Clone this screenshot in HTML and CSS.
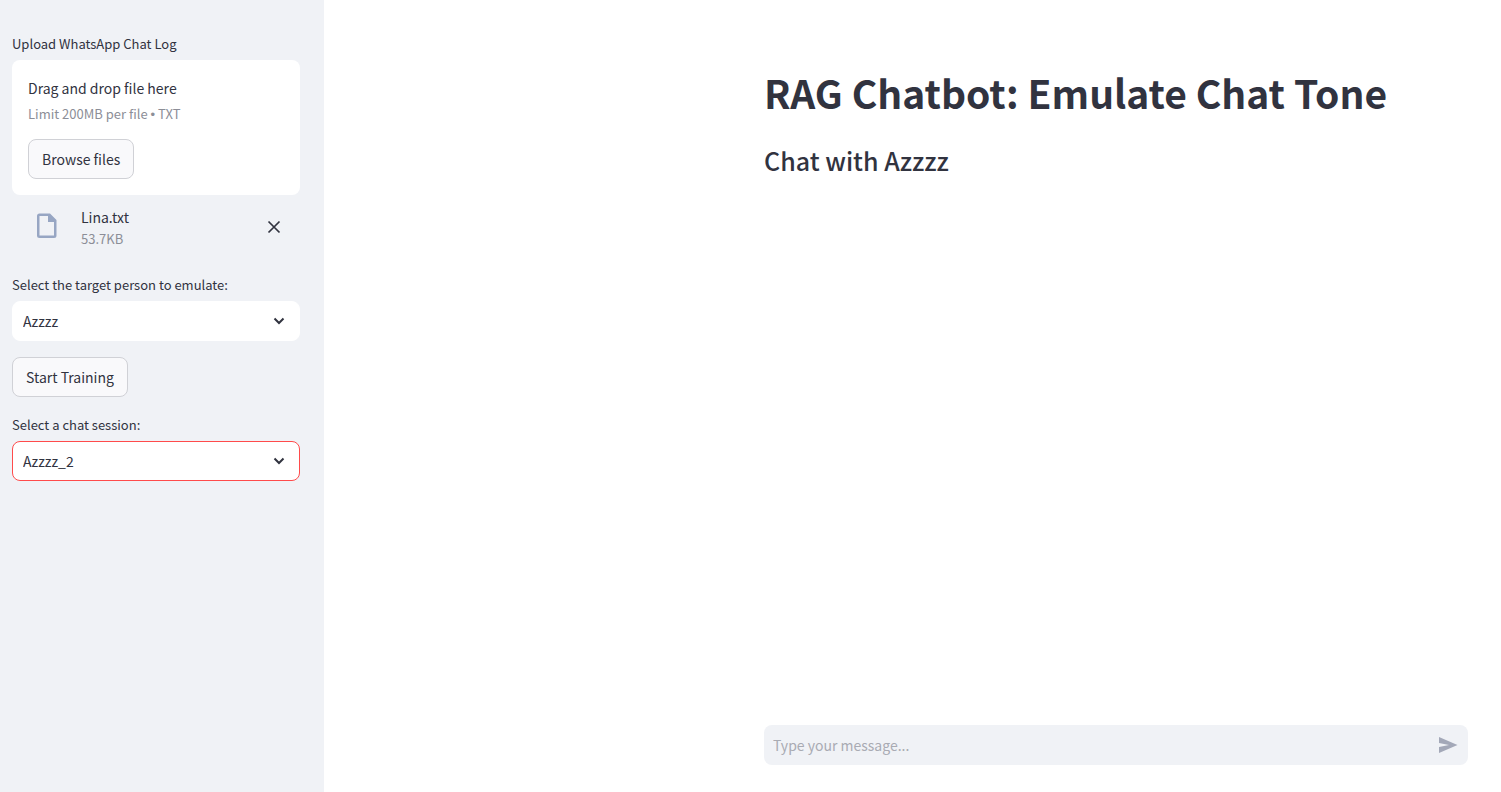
FILE: index.html
```html
<!DOCTYPE html>
<html lang="en">
<head>
  <meta charset="utf-8">
  <meta name="viewport" content="width=device-width, initial-scale=1">
  <title>RAG Chatbot</title>
  <link rel="stylesheet" href="styles.css">
</head>
<body>
  <div class="app">
    <aside class="sidebar">
      <section class="field">
        <label class="label" for="browse">Upload WhatsApp Chat Log</label>
        <div class="dropzone">
          <span class="drop-title">Drag and drop file here</span>
          <span class="drop-limit">Limit 200MB per file <span class="bullet">•</span> TXT</span>
          <button class="button" id="browse" type="button">Browse files</button>
        </div>
        <div class="file">
          <svg class="file-icon" viewBox="0 0 30 30" aria-hidden="true">
            <path fill-rule="evenodd" d="M7.500 2.500H18L24.500 9V24.500Q24.500 27 22 27H7.500Q5 27 5 24.500V5Q5 2.500 7.500 2.500ZM7.500 5V24.500H22V11H16V5Z"/>
          </svg>
          <div class="file-info">
            <span class="file-name">Lina.txt</span>
            <span class="file-size">53.7KB</span>
          </div>
          <button class="remove" type="button" aria-label="Remove Lina.txt">
            <svg viewBox="0 0 20 20" aria-hidden="true"><path d="M4.500 4.500 15.500 15.500M15.500 4.500 4.500 15.500"/></svg>
          </button>
        </div>
      </section>
      <section class="field">
        <label class="label" for="person">Select the target person to emulate:</label>
        <div class="select-wrap">
          <select class="select" id="person"><option>Azzzz</option></select>
          <svg class="chevron" viewBox="0 0 20 20" aria-hidden="true"><path d="M5.500 7.500 10 12 14.500 7.500"/></svg>
        </div>
      </section>
      <button class="button" type="button">Start Training</button>
      <section class="field">
        <label class="label" for="session">Select a chat session:</label>
        <div class="select-wrap">
          <select class="select select-active" id="session"><option>Azzzz_2</option></select>
          <svg class="chevron" viewBox="0 0 20 20" aria-hidden="true"><path d="M5.500 7.500 10 12 14.500 7.500"/></svg>
        </div>
      </section>
    </aside>
    <main class="main">
      <div class="content">
        <h1 class="title">RAG Chatbot: Emulate Chat Tone</h1>
        <h2 class="subtitle">Chat with Azzzz</h2>
        <form class="composer">
          <input class="message" type="text" placeholder="Type your message..." aria-label="Message">
          <button class="send" type="button" aria-label="Send">
            <svg viewBox="0 0 20 18" aria-hidden="true"><path d="M1 1 19.500 9 1 17V11L11 9 1 7Z"/></svg>
          </button>
        </form>
      </div>
    </main>
  </div>
</body>
</html>
```
FILE: styles.css
```css
*,
*::before,
*::after {
  box-sizing: border-box;
}

body {
  margin: 0;
  color: #31333f;
  background: #fff;
  font-family: "Noto Sans CJK SC", "Noto Sans", sans-serif;
  font-size: 14px;
  line-height: 24px;
}

button,
input,
select {
  color: inherit;
  font: inherit;
}

.app {
  display: flex;
  min-height: 100vh;
}

.sidebar {
  display: flex;
  flex: 0 0 324px;
  flex-direction: column;
  align-items: flex-start;
  gap: 16px;
  padding: 32px 24px 24px 12px;
  background: #f0f2f6;
}

.field {
  display: flex;
  flex-direction: column;
  width: 100%;
}

.label {
  margin-bottom: 4px;
  font-size: 13px;
  line-height: 24px;
}

.dropzone {
  display: flex;
  flex-direction: column;
  align-items: flex-start;
  padding: 16px;
  border-radius: 8px;
  background: #fff;
}

.drop-title {
  line-height: 24px;
}

.drop-limit {
  margin-bottom: 11px;
  color: #8c8e97;
  font-size: 13px;
  line-height: 28px;
}

.bullet {
  font-family: "Liberation Sans", sans-serif;
  line-height: 1;
}

.button {
  height: 40px;
  padding: 0 13px;
  border: 1px solid #d0d1d6;
  border-radius: 8px;
  background: #f9f9fb;
  line-height: 22px;
}

.file {
  display: flex;
  align-items: center;
  padding: 11px 16px 7px;
}

.file-icon {
  align-self: flex-start;
  width: 30px;
  height: 30px;
  margin: 5px 19px 0 4px;
  fill: #97a6c3;
}

.file-info {
  display: flex;
  flex: 1;
  flex-direction: column;
  line-height: 22px;
}

.file-size {
  color: #8c8e97;
  font-size: 13px;
}

.remove,
.send {
  display: flex;
  padding: 0;
  border: 0;
  background: none;
}

.remove {
  margin-bottom: 2px;
}

.remove svg {
  width: 20px;
  height: 20px;
  stroke: #31333f;
  stroke-width: 1.7;
}

.select-wrap {
  display: grid;
  align-items: center;
}

.select {
  grid-area: 1 / 1;
  width: 100%;
  height: 40px;
  padding: 0 40px 0 10px;
  border: 1px solid #fff;
  border-radius: 8px;
  appearance: none;
  background: #fff;
}

.select-active {
  border-color: #ff4b4b;
}

.chevron {
  grid-area: 1 / 1;
  justify-self: end;
  width: 20px;
  height: 20px;
  margin-right: 11px;
  fill: none;
  stroke: #31333f;
  stroke-width: 2;
  pointer-events: none;
}

.main {
  display: flex;
  flex: 1;
  justify-content: flex-end;
  padding: 66px 33px 27px;
}

.content {
  display: flex;
  flex: 0 1 704px;
  flex-direction: column;
}

.title {
  margin: 0;
  font-size: 39px;
  font-weight: 700;
  line-height: 52px;
}

.subtitle {
  margin: 25px 0 24px;
  font-size: 25px;
  font-weight: 500;
  line-height: 34px;
}

.composer {
  display: flex;
  align-items: center;
  height: 40px;
  margin-top: auto;
  padding: 0 10px 0 9px;
  border-radius: 8px;
  background: #f0f2f6;
}

.message {
  flex: 1;
  min-width: 0;
  padding: 0;
  border: 0;
  outline: 0;
  background: none;
}

.message::placeholder {
  color: #a9abb3;
}

.send svg {
  width: 20px;
  height: 18px;
  fill: #a3a8b8;
}
```
